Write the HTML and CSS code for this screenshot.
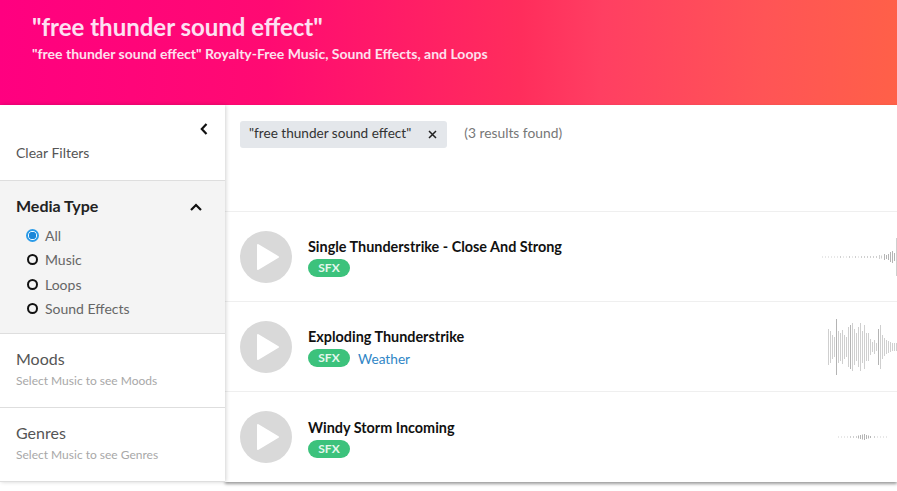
FILE: index.html

```html
<!DOCTYPE html>
<html lang="en">
<head>
    <meta charset="UTF-8">
    <meta name="viewport" content="width=device-width, initial-scale=1.0">
    <title>"free thunder sound effect" Royalty-Free Music</title>
    <link rel="stylesheet" href="styles.css">
</head>
<body>
    <header class="hero">
        <h1>"free thunder sound effect"</h1>
        <p>"free thunder sound effect" Royalty-Free Music, Sound Effects, and Loops</p>
    </header>

    <div class="layout">
        <aside class="sidebar">
            <div class="filter-top">
                <button class="collapse" aria-label="Collapse filters">
                    <svg width="10" height="14" viewBox="0 0 10 14"><path d="M7.5 2 L2.8 7 L7.5 12" fill="none" stroke="#111" stroke-width="2.2"/></svg>
                </button>
                <a class="clear" href="#">Clear Filters</a>
            </div>

            <section class="media-type">
                <div class="media-head">
                    <h2>Media Type</h2>
                    <svg width="14" height="10" viewBox="0 0 14 10"><path d="M2 8 L7 3 L12 8" fill="none" stroke="#111" stroke-width="2.2"/></svg>
                </div>
                <ul class="radios">
                    <li class="checked"><span class="radio"></span>All</li>
                    <li><span class="radio"></span>Music</li>
                    <li><span class="radio"></span>Loops</li>
                    <li><span class="radio"></span>Sound Effects</li>
                </ul>
            </section>

            <section class="filter">
                <h3>Moods</h3>
                <p>Select Music to see Moods</p>
            </section>
            <section class="filter">
                <h3>Genres</h3>
                <p>Select Music to see Genres</p>
            </section>
        </aside>

        <main class="results">
            <div class="toolbar">
                <span class="chip">"free thunder sound effect"
                    <svg width="9" height="9" viewBox="0 0 9 9"><path d="M1 1 L8 8 M8 1 L1 8" stroke="#222" stroke-width="1.5"/></svg>
                </span>
                <span class="count">(3 results found)</span>
            </div>

            <div class="track">
                <span class="play"><svg width="24" height="28" viewBox="0 0 24 28"><path d="M2 2 L22 14 L2 26 Z" fill="#fff" stroke="#fff" stroke-width="2" stroke-linejoin="round"/></svg></span>
                <div class="info">
                    <div class="title">Single Thunderstrike - Close And Strong</div>
                    <div class="tags"><span class="sfx">SFX</span></div>
                </div>
                <svg class="wave" width="80" height="60" viewBox="0 0 80 60">
                    <path class="faint" d="M5.500 29.500v1M8.500 29.500v1M11.500 29.500v1M14.500 29.500v1M17.500 29.500v1M20.500 29.500v1M23.500 29v2M26.500 29.500v1M29.500 29.500v1M32.500 29v2M35.500 29.500v1M38.500 29v2M41.500 29.500v1M44.500 29v2M47.500 29v2M50.500 29v2M53.500 29v2M56.500 29v2M59.500 29v2M62.500 28v4M64.500 28.500v3"/>
                    <path d="M67.500 27v6M69.500 28v4M71.500 27v6M73.500 25v10M75.500 24v12M77.500 26v8"/>
                    <path class="faint" d="M79.500 11v38"/>
                </svg>
            </div>

            <div class="track">
                <span class="play"><svg width="24" height="28" viewBox="0 0 24 28"><path d="M2 2 L22 14 L2 26 Z" fill="#fff" stroke="#fff" stroke-width="2" stroke-linejoin="round"/></svg></span>
                <div class="info">
                    <div class="title">Exploding Thunderstrike</div>
                    <div class="tags"><span class="sfx">SFX</span><a class="tag-link" href="#">Weather</a></div>
                </div>
                <svg class="wave" width="70" height="60" viewBox="0 0 70 60">
                    <path class="faint" d="M1.500 12v36M3.500 14v32M5.500 18v24M7.500 20v20M11.500 14v32M13.500 16v28M15.500 13v34M17.500 18v24M19.500 20v20M21.500 10v40M25.500 6v48M27.500 12v36M29.500 16v28M31.500 10v40M33.500 6v48M35.500 14v32M37.500 8v44M39.500 16v28M41.500 16v28M43.500 22v16M45.500 25v10M47.500 23v14M49.500 26v8M53.500 8v44M55.500 18v24M57.500 21v18M59.500 23v14M61.500 24v12M63.500 25v10M65.500 26v8M67.500 26v8M69.500 26v8"/>
                    <path d="M9.500 2v56M23.500 8v44M51.500 12v36"/>
                </svg>
            </div>

            <div class="track">
                <span class="play"><svg width="24" height="28" viewBox="0 0 24 28"><path d="M2 2 L22 14 L2 26 Z" fill="#fff" stroke="#fff" stroke-width="2" stroke-linejoin="round"/></svg></span>
                <div class="info">
                    <div class="title">Windy Storm Incoming</div>
                    <div class="tags"><span class="sfx">SFX</span></div>
                </div>
                <svg class="wave" width="60" height="60" viewBox="0 0 60 60">
                    <path class="faint" d="M1.500 29.500v1M4.500 29.500v1M7.500 29.500v1M10.500 29.500v1M13.500 29v2M16.500 29v2M19.500 29v2M37.500 29v2M40.500 29.500v1M43.500 29.500v1M46.500 29.500v1M49.500 29.500v1"/>
                    <path d="M21.500 28.500v3M23.500 28v4M25.500 27.500v5M27.500 27v6M29.500 28v4M31.500 28.500v3M33.500 29v2"/>
                </svg>
            </div>
        </main>
    </div>
</body>
</html>
```

FILE: styles.css

```css
* {
    box-sizing: border-box;
    margin: 0;
    padding: 0;
    font-family: Lato, "Open Sans", Arial, sans-serif;
}

html, body {
    height: 491px;
    overflow: hidden;
    background-color: #fff;
}

.hero {
    height: 105px;
    padding: 13px 0 0 32px;
    color: #fff;
    background: linear-gradient(92deg, #ff0080 0%, #ff0a72 30%, #ff2d5c 58%, #ff3f62 67%, #ff5456 85%, #ff6048 100%);
}

.hero h1 {
    font-size: 24px;
    font-weight: 700;
    line-height: 28px;
    color: #fde0f2;
}

.hero p {
    margin-top: 4px;
    font-size: 14px;
    font-weight: 700;
    line-height: 18px;
    color: #fde0ee;
}

.layout {
    display: flex;
    align-items: flex-start;
}

.sidebar {
    width: 225px;
    flex-shrink: 0;
    position: relative;
    z-index: 1;
    background-color: #fff;
    box-shadow: 1px 0 4px rgba(0, 0, 0, 0.18);
}

.filter-top {
    height: 76px;
    display: flex;
    flex-direction: column;
    padding: 0 16px;
    border-bottom: 1px solid #dedede;
}

.collapse {
    align-self: flex-end;
    margin: 17px 0 0 0;
    padding: 0;
    height: 14px;
    background: none;
    border: none;
    line-height: 0;
}

.clear {
    margin-top: 9px;
    font-size: 14px;
    line-height: 16px;
    color: #555;
    text-decoration: none;
}

.media-type {
    height: 153px;
    padding: 14px 22px 0 16px;
    background-color: #f4f4f4;
    border-bottom: 1px solid #dedede;
}

.media-head {
    display: flex;
    justify-content: space-between;
    align-items: center;
    height: 20px;
}

.media-head svg {
    margin-top: 3px;
}

.media-head h2 {
    font-size: 16px;
    font-weight: 700;
    color: #222;
}

.radios {
    list-style: none;
    margin-top: 8px;
    padding-left: 11px;
}

.radios li {
    display: flex;
    align-items: center;
    gap: 7px;
    height: 24.500px;
    font-size: 14px;
    color: #666;
}

.radio {
    width: 11px;
    height: 11px;
    border: 2px solid #111;
    border-radius: 50%;
}

.checked .radio {
    width: 13px;
    height: 13px;
    margin: 0 -1px;
    border: 2px solid #2b9be8;
    background: radial-gradient(circle, #1a86d8 0 3.500px, #fff 4px);
}

.filter {
    height: 74px;
    padding: 16px 16px 0;
    border-bottom: 1px solid #dedede;
}

.filter h3 {
    font-size: 16px;
    font-weight: 400;
    line-height: 18px;
    color: #555;
}

.filter p {
    margin-top: 6px;
    font-size: 12px;
    line-height: 14px;
    color: #a8a8a8;
}

.results {
    flex: 1;
    min-width: 0;
    box-shadow: 0 2px 3px rgba(0, 0, 0, 0.4);
}

.toolbar {
    height: 107px;
    display: flex;
    align-items: flex-start;
    padding: 16px 0 0 15px;
    border-bottom: 1px solid #efefef;
}

.chip {
    display: flex;
    align-items: center;
    gap: 17px;
    height: 27px;
    padding: 0 10px 3px 9px;
    font-size: 13.600px;
    color: #333;
    background-color: #e4e7eb;
    border-radius: 3px;
}

.chip svg {
    margin-top: 3px;
}

.count {
    margin-left: 17px;
    font-size: 13.800px;
    line-height: 24px;
    color: #777;
}

.track {
    height: 90px;
    display: flex;
    align-items: center;
    padding-left: 15px;
    border-bottom: 1px solid #efefef;
    position: relative;
}

.track:last-child {
    border-bottom: none;
}

.play {
    width: 52px;
    height: 52px;
    flex-shrink: 0;
    display: flex;
    align-items: center;
    justify-content: center;
    padding-left: 3px;
    border-radius: 50%;
    background-color: #d9d9d9;
}

.info {
    margin-left: 16px;
    margin-top: 2px;
}

.title {
    font-size: 14.400px;
    font-weight: 700;
    line-height: 17px;
    color: #111;
}

.tags {
    display: flex;
    align-items: center;
    gap: 8px;
    margin-top: 4px;
}

.sfx {
    width: 42px;
    height: 18px;
    font-size: 12px;
    font-weight: 700;
    line-height: 17px;
    text-align: center;
    color: #e4f7ec;
    background-color: #3cc27c;
    border-radius: 9px;
}

.tag-link {
    font-size: 13.700px;
    color: #2f86c6;
    text-decoration: none;
}

.wave {
    position: absolute;
    right: 0;
    top: 15px;
    fill: none;
    stroke: #b4b4b4;
    stroke-width: 1;
}

.wave .faint {
    stroke: #cfcfcf;
}
```
